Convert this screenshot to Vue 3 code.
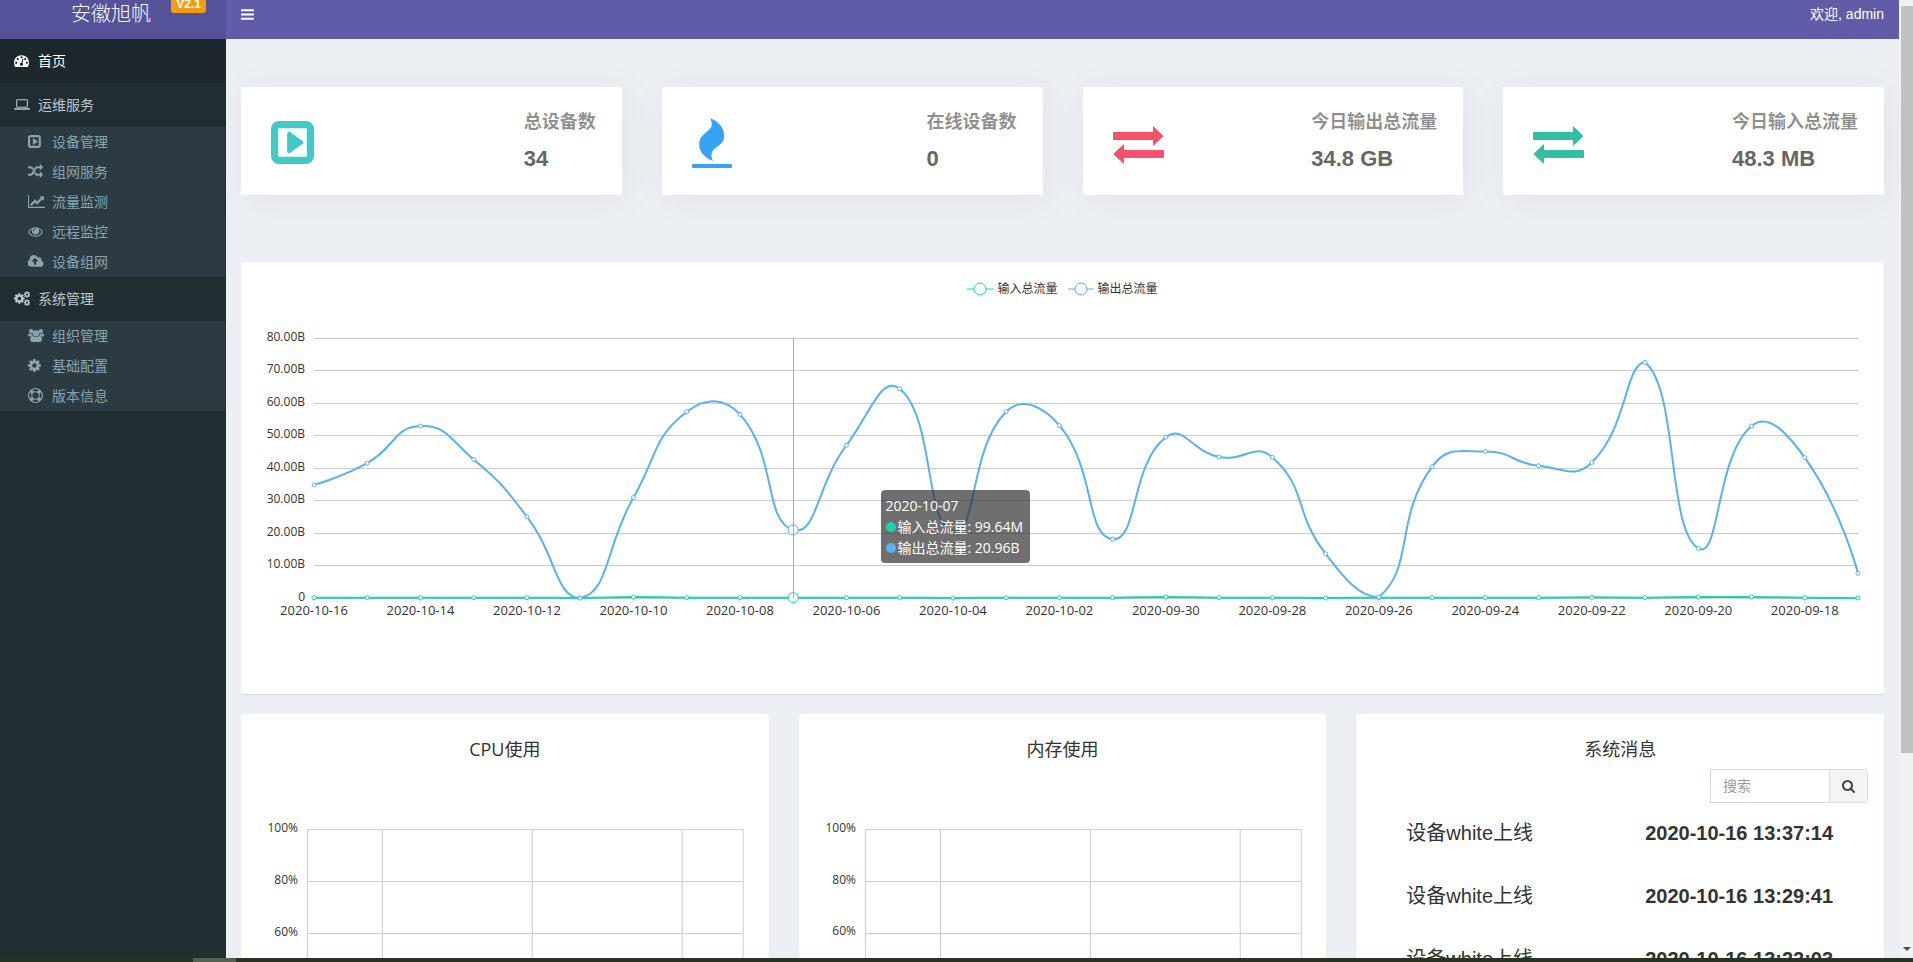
<template>
  <div class="screen">
    <div class="viewport">
      <div class="app">
        <header class="header">
          <a href="#" class="logo">安徽旭帆<span class="version">V2.1</span></a>
          <nav class="navbar">
            <button class="toggle" type="button" aria-label="切换菜单">
              <svg class="icon" :viewBox="icons.bars.box"><path :d="icons.bars.paths[0].d" /></svg>
            </button>
            <a href="#" class="user">欢迎, admin</a>
          </nav>
        </header>

        <div class="wrapper">
          <aside class="sidebar">
            <ul class="menu">
              <li v-for="item in menu" :key="item.label">
                <a href="#" class="menu-link" :class="{ active: item.active }">
                  <span class="menu-icon">
                    <svg class="icon" :viewBox="icons[item.icon].box">
                      <path v-for="(p, i) in icons[item.icon].paths" :key="i" :d="p.d" :transform="p.t" />
                    </svg>
                  </span>
                  {{ item.label }}
                </a>
                <ul v-if="item.children" class="submenu">
                  <li v-for="child in item.children" :key="child.label">
                    <a href="#" class="submenu-link">
                      <span class="menu-icon">
                        <svg class="icon" :viewBox="icons[child.icon].box">
                          <path v-for="(p, i) in icons[child.icon].paths" :key="i" :d="p.d" :transform="p.t" />
                        </svg>
                      </span>
                      {{ child.label }}
                    </a>
                  </li>
                </ul>
              </li>
            </ul>
          </aside>

          <main class="content">
            <section class="stats">
              <div v-for="stat in stats" :key="stat.label" class="stat">
                <svg class="stat-icon" :class="stat.type" :viewBox="icons[stat.icon].box">
                  <path v-for="(p, i) in icons[stat.icon].paths" :key="i" :d="p.d" />
                </svg>
                <div class="stat-text">
                  <div class="stat-label">{{ stat.label }}</div>
                  <div class="stat-value">{{ stat.value }}</div>
                </div>
              </div>
            </section>

            <section ref="flowPanel" class="panel flow">
              <ul class="legend">
                <li v-for="s in series" :key="s.name" :class="s.type">
                  <svg class="legend-mark" viewBox="0 0 26 16">
                    <path class="legend-line" d="M0 9H26" />
                    <circle class="symbol" cx="13" cy="9" r="6" />
                  </svg>
                  <span>{{ s.name }}</span>
                </li>
              </ul>
              <svg class="flow-chart" :viewBox="`0 0 ${flowWidth} 380`">
                <g v-for="tick in flowTicks" :key="tick.label">
                  <line class="grid-line" :x1="plot.left" :x2="plotRight" :y1="tick.y" :y2="tick.y" />
                  <text class="axis-label end" :x="plot.left - 9" :y="tick.y - 2">{{ tick.label }}</text>
                </g>
                <g v-for="date in dateTicks" :key="date.label">
                  <line class="axis-tick" :x1="date.x" :x2="date.x" :y1="plot.bottom" :y2="plot.bottom + 5" />
                  <text class="axis-label date" :x="date.x" :y="plot.bottom + 12">{{ date.label }}</text>
                </g>
                <g v-for="s in series" :key="s.name" :class="s.type">
                  <path class="curve" :d="smoothPath(toPoints(s.data))" />
                  <circle
                    v-for="(p, i) in toPoints(s.data)"
                    :key="i"
                    class="symbol"
                    :cx="p[0]"
                    :cy="p[1]"
                    :r="i === hovered ? 5 : 2"
                  />
                </g>
                <line class="pointer" :x1="hoverX" :x2="hoverX" :y1="plot.top" :y2="plot.bottom" />
              </svg>
              <div class="tooltip" :style="{ left: hoverX + 87 + 'px' }">
                <div>{{ dates[hovered] }}</div>
                <div v-for="s in series" :key="s.name" class="tooltip-row" :class="s.type">
                  <span class="dot"></span>{{ s.name }}: {{ s.hint }}
                </div>
              </div>
            </section>

            <section class="bottom">
              <div v-for="(title, n) in ['CPU使用', '内存使用']" :key="title" class="panel usage">
                <h3 class="panel-title">{{ title }}</h3>
                <svg :ref="(el) => { if (n === 0) usageChart = el }" class="usage-chart" :viewBox="`0 0 ${usageWidth} 350`">
                  <g v-for="(pct, i) in [100, 80, 60, 40, 20, 0]" :key="pct">
                    <line class="grid-line" x1="66" :x2="usageWidth - 26" :y1="60.5 + i * 52" :y2="60.5 + i * 52" />
                    <text class="axis-label end" x="57" :y="58 + i * 52">{{ pct }}%</text>
                  </g>
                  <line v-for="x in usageLines" :key="x" class="grid-line" :x1="x" :x2="x" y1="60" y2="320" />
                </svg>
              </div>

              <div class="panel messages">
                <h3 class="panel-title">系统消息</h3>
                <form class="search" @submit.prevent>
                  <input v-model="keyword" class="search-input" type="text" placeholder="搜索" aria-label="搜索" />
                  <button class="search-button" type="submit" aria-label="搜索">
                    <svg class="icon" :viewBox="icons.search.box"><path :d="icons.search.paths[0].d" /></svg>
                  </button>
                </form>
                <table class="message-table">
                  <tbody>
                    <tr v-for="m in messages" :key="m.time">
                      <td>{{ m.text }}</td>
                      <td class="time">{{ m.time }}</td>
                    </tr>
                  </tbody>
                </table>
              </div>
            </section>
          </main>
        </div>
      </div>

      <div class="scrollbar" aria-hidden="true">
        <div class="thumb"></div>
        <div class="arrow"></div>
      </div>
    </div>
    <div class="taskbar"><div class="taskbar-item"></div></div>
  </div>
</template>

<script setup>
import { ref, computed, onMounted, onUnmounted } from 'vue'

const COG = 'M1152 896q0-106-75-181t-181-75-181 75-75 181 75 181 181 75 181-75 75-181zm512-109v222q0 12-8 23t-20 13l-185 28q-19 54-39 91 35 50 107 138 10 12 10 25t-9 23q-27 37-99 108t-94 71q-12 0-26-9l-138-108q-44 23-91 38-16 136-29 186-7 28-36 28h-222q-14 0-24.5-8.5t-11.5-21.5l-28-184q-49-16-90-37l-141 107q-10 9-25 9-14 0-25-11-126-114-165-168-7-10-7-23 0-12 8-23 15-21 51-66.5t54-70.5q-27-50-41-99l-183-27q-13-2-21-12.5t-8-23.5v-222q0-12 8-23t19-13l186-28q14-46 39-92-40-57-107-138-10-12-10-24 0-10 9-23 26-36 98.5-107.5t94.5-71.5q13 0 26 10l138 107q44-23 91-38 16-136 29-186 7-28 36-28h222q14 0 24.5 8.5t11.5 21.5l28 184q49 16 90 37l142-107q9-9 24-9 13 0 25 10 129 119 165 170 7 8 7 22 0 12-8 23-15 21-51 66.5t-54 70.5q26 50 41 98l183 28q13 2 21 12.5t8 23.5z'
const PLAY = 'M1280 896q0 33-27 52l-448 320q-31 23-66 5-35-17-35-57v-640q0-40 35-57 35-18 66 5l448 320q27 19 27 52zm128 480v-960q0-14-9-23t-23-9h-960q-14 0-23 9t-9 23v960q0 14 9 23t23 9h960q14 0 23-9t9-23zm256-960v960q0 119-84.5 203.5t-203.5 84.5h-960q-119 0-203.5-84.5t-84.5-203.5v-960q0-119 84.5-203.5t203.5-84.5h960q119 0 203.5 84.5t84.5 203.5z'

const icons = {
  bars: {
    box: '128 0 1536 1792',
    paths: [{ d: 'M1664 1344v128q0 26-19 45t-45 19h-1408q-26 0-45-19t-19-45v-128q0-26 19-45t45-19h1408q26 0 45 19t19 45zm0-512v128q0 26-19 45t-45 19h-1408q-26 0-45-19t-19-45v-128q0-26 19-45t45-19h1408q26 0 45 19t19 45zm0-512v128q0 26-19 45t-45 19h-1408q-26 0-45-19t-19-45v-128q0-26 19-45t45-19h1408q26 0 45 19t19 45z' }]
  },
  dashboard: {
    box: '0 0 1792 1792',
    paths: [{ d: 'M384 1152q0-53-37.5-90.5t-90.5-37.5-90.5 37.5-37.5 90.5 37.5 90.5 90.5 37.5 90.5-37.5 37.5-90.5zm192-448q0-53-37.5-90.5t-90.5-37.5-90.5 37.5-37.5 90.5 37.5 90.5 90.5 37.5 90.5-37.5 37.5-90.5zm428 481l101-382q6-26-7.5-48.5t-38.5-29.5-48 6.5-30 39.5l-101 382q-60 5-107 43.5t-63 98.5q-20 77 20 146t117 89 146-20 89-117q16-60-6-117t-72-91zm660-33q0-53-37.5-90.5t-90.5-37.5-90.5 37.5-37.5 90.5 37.5 90.5 90.5 37.5 90.5-37.5 37.5-90.5zm-640-640q0-53-37.5-90.5t-90.5-37.5-90.5 37.5-37.5 90.5 37.5 90.5 90.5 37.5 90.5-37.5 37.5-90.5zm448 192q0-53-37.5-90.5t-90.5-37.5-90.5 37.5-37.5 90.5 37.5 90.5 90.5 37.5 90.5-37.5 37.5-90.5zm320 448q0 261-141 483-19 29-54 29h-1402q-35 0-54-29-141-221-141-483 0-182 71-348t191-286 286-191 348-71 348 71 286 191 191 286 71 348z' }]
  },
  laptop: {
    box: '0 0 1920 1792',
    paths: [{ d: 'M416 1280q-66 0-113-47t-47-113v-704q0-66 47-113t113-47h1088q66 0 113 47t47 113v704q0 66-47 113t-113 47h-1088zm-32-864v704q0 13 9.5 22.5t22.5 9.5h1088q13 0 22.5-9.5t9.5-22.5v-704q0-13-9.5-22.5t-22.5-9.5h-1088q-13 0-22.5 9.5t-9.5 22.5zm1376 928h160v96q0 40-47 68t-113 28h-1600q-66 0-113-28t-47-68v-96h1760zm-720 96q16 0 16-16t-16-16h-160q-16 0-16 16t16 16h160z' }]
  },
  play: { box: '128 0 1536 1792', paths: [{ d: PLAY }] },
  playLarge: { box: '128 128 1536 1536', paths: [{ d: PLAY }] },
  random: {
    box: '0 0 1792 1792',
    paths: [{ d: 'M666 481q-60 92-137 273-22-45-37-72.5t-40.5-63.5-51-56.5-63-35-81.5-14.5h-224q-14 0-23-9t-9-23v-192q0-14 9-23t23-9h224q250 0 410 225zm1126 799q0 14-9 23l-320 320q-9 9-23 9-13 0-22.5-9.5t-9.5-22.5v-192q-32 0-85 .5t-81 1-73-1-71-5-64-10.5-63-18.5-58-28.5-59-40-55-53.5-56-69.5q59-93 136-273 22 45 37 72.5t40.5 63.5 51 56.5 63 35 81.5 14.5h256v-192q0-14 9-23t23-9q12 0 24 10l319 319q9 9 9 23zm0-896q0 14-9 23l-320 320q-9 9-23 9-13 0-22.5-9.5t-9.5-22.5v-192h-256q-48 0-87 15t-69 45-51 61.5-45 77.5q-32 62-78 171-29 66-49.5 111t-54 105-64 100-74 83-90 68.5-106.5 42-128 16.5h-224q-14 0-23-9t-9-23v-192q0-14 9-23t23-9h224q48 0 87-15t69-45 51-61.5 45-77.5q32-62 78-171 29-66 49.5-111t54-105 64-100 74-83 90-68.5 106.5-42 128-16.5h256v-192q0-14 9-23t23-9q12 0 24 10l319 319q9 9 9 23z' }]
  },
  chart: {
    box: '0 0 2048 1792',
    paths: [{ d: 'M2048 1536v128h-2048v-1536h128v1408h1920zm-128-1248v435q0 21-19.5 29.5t-35.5-7.5l-121-121-633 633q-10 10-23 10t-23-10l-233-233-416 416-192-192 585-585q10-10 23-10t23 10l233 233 464-464-121-121q-16-16-7.5-35.5t29.5-19.5h435q14 0 23 9t9 23z' }]
  },
  eye: {
    box: '0 0 1792 1792',
    paths: [{ d: 'M1664 960q-152-236-381-353 61 104 61 225 0 185-131.5 316.5t-316.5 131.5-316.5-131.5-131.5-316.5q0-121 61-225-229 117-381 353 133 205 333.5 326.5t434.5 121.5 434.5-121.5 333.5-326.5zm-720-384q0-20-14-34t-34-14q-125 0-214.5 89.5t-89.5 214.5q0 20 14 34t34 14 34-14 14-34q0-86 61-147t147-61q20 0 34-14t14-34zm848 384q0 34-20 69-140 230-376.5 368.5t-499.5 138.5-499.5-139-376.5-368q-20-35-20-69t20-69q140-229 376.5-368t499.5-139 499.5 139 376.5 368q20 35 20 69z' }]
  },
  cloud: {
    box: '0 0 1856 1792',
    paths: [{ d: 'M1216 864q0-14-9-23l-352-352q-9-9-23-9t-23 9l-351 351q-10 12-10 24 0 14 9 23t23 9h224v352q0 13 9.5 22.5t22.5 9.5h192q13 0 22.5-9.5t9.5-22.5v-352h224q13 0 22.5-9.5t9.5-22.5zm640 288q0 159-112.5 271.5t-271.5 112.5h-1088q-185 0-316.5-131.5t-131.5-316.5q0-130 70-240t188-165q-2-30-2-43 0-212 150-362t362-150q156 0 285.5 87t188.5 231q71-62 166-62 106 0 181 75t75 181q0 76-41 138 130 31 213.5 135.5t83.5 238.5z' }]
  },
  cogs: {
    box: '0 0 1920 1792',
    paths: [
      { d: COG, t: 'translate(-106 149) scale(.83)' },
      { d: COG, t: 'translate(1108 -30) scale(.5)' },
      { d: COG, t: 'translate(1108 930) scale(.5)' }
    ]
  },
  users: {
    box: '0 0 1920 1792',
    paths: [
      { d: 'M640 384a256 256 0 1 1-512 0a256 256 0 1 1 512 0z' },
      { d: 'M1792 384a256 256 0 1 1-512 0a256 256 0 1 1 512 0z' },
      { d: 'M1344 640a384 384 0 1 1-768 0a384 384 0 1 1 768 0z' },
      { d: 'M593 896q-162 5-265 128H194Q0 1024 0 850Q0 640 124 640q60 60 260 60l132-22q-10 120 77 218z' },
      { d: 'M1327 896q162 5 265 128h134q194 0 194-174q0-210-124-210q-60 60-260 60l-132-22q10 120-77 218z' },
      { d: 'M1664 1400q0 264-267 264H523q-267 0-267-264q0-440 290-472q180 150 414 150t414-150q290 32 290 472z' }
    ]
  },
  cog: { box: '128 0 1536 1792', paths: [{ d: COG }] },
  ring: {
    box: '0 0 1792 1792',
    paths: [{ d: 'M896 0a896 896 0 1 1 0 1792a896 896 0 1 1 0-1792zM896 128a768 768 0 0 0-382 102l194 194a560 560 0 0 1 376 0l194-194a768 768 0 0 0-382-102zM230 1278l194-194a560 560 0 0 1 0-376l-194-194a768 768 0 0 0 0 764zM896 1664a768 768 0 0 0 382-102l-194-194a560 560 0 0 1-376 0l-194 194a768 768 0 0 0 382 102zM896 1280a384 384 0 1 0 0-768a384 384 0 1 0 0 768zM1368 1084l194 194a768 768 0 0 0 0-764l-194 194a560 560 0 0 1 0 376z' }]
  },
  search: {
    box: '64 128 1664 1664',
    paths: [{ d: 'M1216 832q0-185-131.5-316.5t-316.5-131.5-316.5 131.5-131.5 316.5 131.5 316.5 316.5 131.5 316.5-131.5 131.5-316.5zm512 832q0 52-38 90t-90 38q-54 0-90-38l-343-342q-179 124-399 124-143 0-273.5-55.5t-225-150-150-225-55.5-273.5 55.5-273.5 150-225 225-150 273.5-55.5 273.5 55.5 225 150 150 225 55.5 273.5q0 220-124 399l343 343q37 37 37 90z' }]
  },
  flame: {
    box: '0 0 40 50',
    paths: [
      { d: 'M18 0C28 4 33 11 32 20C31 28 20 29 19.5 36C19.5 39 20 41 21 43C13 40 6.5 34 7.2 25C7.5 16 19.5 13 19.8 7C19.8 4 19 2 18 0z' },
      { d: 'M1 46H39Q40 46 40 47V49Q40 50 39 50H1Q0 50 0 49V47Q0 46 1 46z' }
    ]
  },
  exchange: {
    box: '0 0 51 38',
    paths: [
      { d: 'M1 6H40V0.5Q40 0 40.6 .4L50 9.4Q50.6 10 50 10.6L40.6 19.6Q40 20 40 19.5V14H1Q0 14 0 13V7Q0 6 1 6z' },
      { d: 'M50 24H11V18.500Q11 18 10.400 18.400L.8 27.400Q.2 28 .8 28.600L10.400 37.600Q11 38 11 37.500V32H50Q51 32 51 31V25Q51 24 50 24z' }
    ]
  }
}

const menu = [
  { label: '首页', icon: 'dashboard', active: true },
  {
    label: '运维服务',
    icon: 'laptop',
    children: [
      { label: '设备管理', icon: 'play' },
      { label: '组网服务', icon: 'random' },
      { label: '流量监测', icon: 'chart' },
      { label: '远程监控', icon: 'eye' },
      { label: '设备组网', icon: 'cloud' }
    ]
  },
  {
    label: '系统管理',
    icon: 'cogs',
    children: [
      { label: '组织管理', icon: 'users' },
      { label: '基础配置', icon: 'cog' },
      { label: '版本信息', icon: 'ring' }
    ]
  }
]

const stats = [
  { label: '总设备数', value: '34', icon: 'playLarge', type: 'total' },
  { label: '在线设备数', value: '0', icon: 'flame', type: 'online' },
  { label: '今日输出总流量', value: '34.8 GB', icon: 'exchange', type: 'output' },
  { label: '今日输入总流量', value: '48.3 MB', icon: 'exchange', type: 'input' }
]

const messages = [
  { text: '设备white上线', time: '2020-10-16 13:37:14' },
  { text: '设备white上线', time: '2020-10-16 13:29:41' },
  { text: '设备white上线', time: '2020-10-16 13:22:03' }
]

const keyword = ref('')

// newest day first
const dates = Array.from({ length: 30 }, (_, i) =>
  new Date(Date.UTC(2020, 9, 16 - i)).toISOString().slice(0, 10)
)

const series = [
  {
    name: '输入总流量',
    type: 'in',
    hint: '99.64M',
    data: [0.1, 0.1, 0.1, 0.1, 0.1, 0, 0.3, 0.1, 0.1, 0.1, 0.1, 0.1, 0, 0.1, 0.1, 0.1, 0.3, 0.1, 0.1, 0, 0.1, 0.1, 0.1, 0.1, 0.2, 0.1, 0.3, 0.3, 0.1, 0]
  },
  {
    name: '输出总流量',
    type: 'out',
    hint: '20.96B',
    data: [34.8, 41.5, 52.9, 42.6, 25, 0, 30.9, 57.3, 56.5, 20.96, 47, 64.4, 20.5, 57.3, 53.1, 18.1, 49.5, 43.4, 43.3, 13.6, 0.3, 40.4, 45.1, 40.7, 41.7, 72.5, 15.3, 52.9, 43.2, 7.6]
  }
]

const hovered = 9
const plot = { left: 73, top: 24, bottom: 284 }
const flowPanel = ref(null)
const flowWidth = ref(1643)
const usageWidth = ref(528)
let usageChart = null

const plotRight = computed(() => flowWidth.value - 26)
const xAt = (i) => plot.left + ((plotRight.value - plot.left) * i) / (dates.length - 1)
const yAt = (v) => plot.bottom - (v * (plot.bottom - plot.top)) / 80
const hoverX = computed(() => Math.round(xAt(hovered)) + 0.5)

const flowTicks = computed(() =>
  [0, 10, 20, 30, 40, 50, 60, 70, 80].map((v) => ({
    label: v ? v.toFixed(2) + 'B' : '0',
    y: Math.floor(yAt(v)) + 0.5
  }))
)

const dateTicks = computed(() =>
  dates.map((label, i) => ({ label, x: xAt(i) })).filter((_, i) => i % 2 === 0)
)

const usageLines = computed(() => {
  const w = usageWidth.value - 92
  return [0, 5, 15, 25, 29].map((n) => Math.floor(66 + (w * n) / 29) + 0.5)
})

const toPoints = (data) => data.map((v, i) => [xAt(i), yAt(v)])

// Control points follow the chord between both neighbours, limited to the data range
const smoothPath = (pts) => {
  const ys = pts.map((p) => p[1])
  const min = Math.min(...ys)
  const max = Math.max(...ys)
  const clamp = (p) => [p[0], Math.min(max, Math.max(min, p[1]))]
  const dist = (a, b) => Math.hypot(a[0] - b[0], a[1] - b[1])

  let d = `M${pts[0][0]} ${pts[0][1]}`
  let c0 = pts[0]
  for (let i = 1; i < pts.length; i++) {
    const p = pts[i]
    const prev = pts[i - 1]
    const next = pts[i + 1]
    let c1 = p
    let nextC0 = p
    if (next) {
      const v = [next[0] - prev[0], next[1] - prev[1]]
      const ratio = dist(p, next) / (dist(p, next) + dist(p, prev))
      c1 = clamp([p[0] - v[0] * 0.5 * (1 - ratio), p[1] - v[1] * 0.5 * (1 - ratio)])
      nextC0 = clamp([p[0] + v[0] * 0.5 * ratio, p[1] + v[1] * 0.5 * ratio])
    }
    d += `C${c0.join(' ')} ${c1.join(' ')} ${p.join(' ')}`
    c0 = nextC0
  }
  return d
}

const resize = () => {
  flowWidth.value = flowPanel.value.clientWidth
  usageWidth.value = Math.round(usageChart.getBoundingClientRect().width)
}

onMounted(() => {
  resize()
  window.addEventListener('resize', resize)
})
onUnmounted(() => window.removeEventListener('resize', resize))
</script>

<style>
body {
  margin: 0;
  background: #ecf0f5;
}
</style>

<style scoped>
* {
  box-sizing: border-box;
}

.screen {
  display: flex;
  flex-direction: column;
  height: 100vh;
  overflow: hidden;
  font-family: "Liberation Sans", "Noto Sans CJK SC", sans-serif;
  font-size: 14px;
  color: #333;
}

.viewport {
  flex: 1;
  display: flex;
  min-height: 0;
}

.app {
  flex: 1;
  display: flex;
  flex-direction: column;
  min-width: 0;
}

ul {
  list-style: none;
  margin: 0;
  padding: 0;
}

a {
  color: inherit;
  text-decoration: none;
}

.icon {
  display: block;
  height: 15px;
  fill: currentColor;
}

/* Header, scrolled slightly out of view */
.header {
  flex: none;
  display: flex;
  align-items: flex-end;
  height: 39px;
  overflow: hidden;
  color: #fff;
}

.logo {
  position: relative;
  width: 226px;
  height: 50px;
  padding-right: 4px;
  background: #555299;
  font-size: 20px;
  line-height: 50px;
  font-weight: 300;
  text-align: center;
}

.version {
  position: absolute;
  top: 6px;
  right: 20px;
  padding: 0 5px;
  border-radius: 3px;
  background: #f39c12;
  font-size: 12px;
  line-height: 18px;
  font-weight: bold;
}

.navbar {
  flex: 1;
  display: flex;
  align-items: center;
  justify-content: space-between;
  height: 50px;
  padding: 0 15px;
  background: #605ca8;
}

.user {
  padding-bottom: 2px;
}

.toggle {
  padding: 0;
  border: 0;
  background: none;
  color: #fff;
}

/* Sidebar */
.wrapper {
  flex: 1;
  display: flex;
  min-height: 0;
}

.sidebar {
  flex: none;
  width: 226px;
  background: #222d32;
}

.menu-link,
.submenu-link {
  display: flex;
  align-items: center;
  padding-bottom: 2px;
}

.menu-link {
  height: 44px;
  padding-left: 14px;
  color: #b8c7ce;
}

.menu-link.active {
  background: #1e282c;
  color: #fff;
}

.submenu {
  margin-right: 1px;
  background: #2c3b41;
}

.submenu-link {
  height: 30px;
  padding-left: 28px;
  color: #8aa4af;
}

.menu-icon {
  width: 24px;
}

/* Content */
.content {
  flex: 1;
  min-width: 0;
  padding: 48px 15px 0;
  overflow: hidden;
  background: #ecf0f5;
}

.stats {
  display: grid;
  grid-template-columns: repeat(4, 1fr);
  gap: 40px;
  margin-bottom: 67px;
}

.stat {
  display: flex;
  align-items: center;
  justify-content: space-between;
  padding: 26px 26px 25px 30px;
  background: #fff;
  box-shadow: 4px 4px 40px rgba(0, 0, 0, 0.05);
  font-weight: bold;
}

.stat-icon {
  margin-top: 2px;
  fill: currentColor;
}

.total {
  height: 43px;
  color: #40c9c6;
}

.online {
  height: 50px;
  color: #36a3f7;
}

.output,
.input {
  height: 38px;
  margin-top: 6px;
}

.output {
  color: #f4516c;
}

.input {
  color: #34bfa3;
}

.stat-label {
  margin-bottom: 17px;
  color: rgba(0, 0, 0, 0.45);
  font-size: 18px;
  line-height: 18px;
}

.stat-value {
  color: #666;
  font-size: 22px;
  line-height: 22px;
}

.panel {
  border-radius: 3px;
  background: #fff;
  box-shadow: 0 1px 1px rgba(0, 0, 0, 0.1);
}

/* Charts */
.flow {
  position: relative;
  margin-bottom: 20px;
  font-family: "Open Sans", "Noto Sans CJK SC", sans-serif;
}

.legend {
  display: flex;
  justify-content: center;
  align-items: center;
  gap: 10px;
  height: 52px;
  font-size: 12px;
}

.legend li {
  display: flex;
  align-items: center;
  gap: 4px;
}

.legend-mark {
  width: 26px;
  height: 16px;
}

.in {
  --series: #19d4ae;
}

.out {
  --series: #5ab1ef;
}

.legend-line,
.curve {
  fill: none;
  stroke: var(--series);
  stroke-width: 2;
}

.legend-line {
  stroke-width: 1;
}

.symbol {
  fill: #fff;
  stroke: var(--series);
}

.flow-chart {
  display: block;
  width: 100%;
  height: 380px;
}

.grid-line {
  stroke: #ccc;
}

.axis-tick {
  stroke: #ddd;
}

.axis-label {
  fill: #333;
  font-size: 12px;
  dominant-baseline: central;
}

.end {
  text-anchor: end;
}

.date {
  font-size: 13px;
  text-anchor: middle;
}

.pointer {
  stroke: #aaa;
}

.tooltip {
  position: absolute;
  top: 228px;
  padding: 5px 7px 5px 5px;
  border-radius: 4px;
  background: rgba(50, 50, 50, 0.7);
  color: #fff;
  font-size: 14px;
  line-height: 21px;
  white-space: nowrap;
}

.tooltip-row {
  display: flex;
  align-items: center;
}

.dot {
  width: 10px;
  height: 10px;
  margin-right: 2px;
  border-radius: 50%;
  background: var(--series);
}

.bottom {
  display: grid;
  grid-template-columns: repeat(3, 1fr);
  gap: 30px;
}

.panel-title {
  margin: 0;
  padding: 23px 0 8px;
  font-family: "Open Sans", "Noto Sans CJK SC", sans-serif;
  font-size: 18px;
  line-height: 24px;
  font-weight: 400;
  text-align: center;
}

.usage-chart {
  display: block;
  width: 100%;
  height: 350px;
  font-family: "Open Sans", sans-serif;
}

/* Messages */
.search {
  display: flex;
  justify-content: flex-end;
  padding-right: 16px;
}

.search-input {
  width: 119px;
  height: 34px;
  padding: 0 12px;
  border: 1px solid #d2d6de;
  border-right: 0;
  border-radius: 0;
  background: #fff;
  font: inherit;
  outline: none;
}

.search-input::placeholder {
  color: #999;
}

.search-button {
  display: flex;
  align-items: center;
  justify-content: center;
  width: 39px;
  height: 34px;
  padding: 0;
  border: 1px solid #ddd;
  border-radius: 0 3px 3px 0;
  background: #f4f4f4;
  color: #444;
}

.search-button .icon {
  height: 13px;
}

.message-table {
  width: 100%;
  padding-left: 50px;
  border-spacing: 0;
  table-layout: fixed;
  font-size: 20px;
  line-height: 28px;
}

.message-table td {
  padding: 16px 0 19px;
  white-space: nowrap;
}

.time {
  font-weight: bold;
}

/* Window edges */
.scrollbar {
  flex: none;
  display: flex;
  flex-direction: column;
  align-items: flex-end;
  justify-content: space-between;
  width: 14px;
  padding: 6px 0 7px;
  background: #f1f1f1;
}

.thumb {
  width: 12px;
  height: 79%;
  background: #c1c1c1;
}

.arrow {
  margin-right: 2px;
  border: 4px solid transparent;
  border-top-color: #505050;
  border-bottom: 0;
}

.taskbar {
  flex: none;
  height: 4px;
  padding-left: 193px;
  background: #283423;
}

.taskbar-item {
  width: 43px;
  height: 4px;
  background: #566052;
}
</style>
